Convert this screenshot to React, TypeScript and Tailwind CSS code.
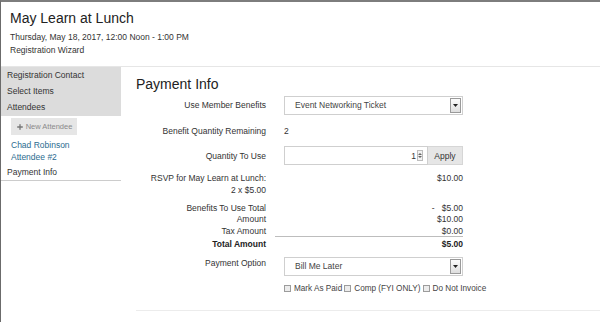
import { Plus } from "lucide-react";

const FONT = { fontFamily: '"Liberation Sans", Arial, sans-serif' };

function SelectBox({ value }: { value: string }) {
  return (
    <div className="flex h-[19px] w-[179px] items-center justify-between border border-[#cfcfcf] bg-white pl-[10px] pr-[1px]">
      <span className="text-[8.5px] text-[#444]">{value}</span>
      <div className="flex h-[15px] w-[11px] items-center justify-center border border-[#9a9a9a] bg-gradient-to-b from-[#fbfbfb] to-[#dedede]">
        <svg width="5" height="3" viewBox="0 0 5 3">
          <path d="M0 0h5L2.5 3z" fill="#222" />
        </svg>
      </div>
    </div>
  );
}

function Check({ label }: { label: string }) {
  return (
    <span className="flex shrink-0 items-center">
      <span className="mr-[3px] h-[7px] w-[7px] border border-[#9c9c9c] bg-[#ececec]" />
      <span className="mr-[2px]">{label}</span>
    </span>
  );
}

const SIDE_TOP = ["Registration Contact", "Select Items", "Attendees"];

export default function App() {
  return (
    <div
      style={FONT}
      className="h-[322px] w-[600px] overflow-hidden border-l border-t-2 border-l-[#6b6b6b] border-t-[#7d7d7d] bg-white text-[#333]"
    >
      <div className="border-b border-[#e6e6e6] px-[9px] pb-[10px] pt-[8px]">
        <h1 className="text-[14px] leading-[16px] text-[#222]">May Learn at Lunch</h1>
        <p className="mt-[5px] text-[8.5px] leading-[12.6px]">Thursday, May 18, 2017, 12:00 Noon - 1:00 PM</p>
        <p className="text-[8.5px] leading-[12.6px]">Registration Wizard</p>
      </div>

      <div className="flex">
        <aside className="w-[120px] shrink-0 self-start text-[8.5px]">
          <div className="bg-[#dcdcdc] pb-[1px] pt-[1px]">
            {SIDE_TOP.map((s) => (
              <div key={s} className="pl-[6px] leading-[15.7px]">{s}</div>
            ))}
          </div>
          <div className="ml-[10px] mt-[2px] flex h-[17px] w-[66px] items-center justify-center gap-[2px] bg-[#e6e6e6] text-[7.5px] text-[#8a8a8a]">
            <Plus size={8} strokeWidth={4} className="text-[#777]" />
            New Attendee
          </div>
          <div className="mt-[4px] pl-[10px] text-[#2b6b8f]">
            <div className="leading-[12px]">Chad Robinson</div>
            <div className="leading-[12px]">Attendee #2</div>
          </div>
          <div className="mt-[1.5px] border-b border-[#cccccc] pl-[6px] leading-[15px]">Payment Info</div>
        </aside>

        <main className="flex-1 pl-[15px] pt-[7.7px] text-[8.5px]">
          <h2 className="text-[14px] leading-[18px] text-[#222]">Payment Info</h2>

          <div className="mt-[3px] grid grid-cols-[130px_179px] items-center gap-x-[18px]">
            <div className="text-right">Use Member Benefits</div>
            <SelectBox value="Event Networking Ticket" />

            <div className="mt-[6.5px] flex h-[19px] items-center justify-end">Benefit Quantity Remaining</div>
            <div className="mt-[6.5px] flex h-[19px] items-center">2</div>

            <div className="mt-[6px] text-right">Quantity To Use</div>
            <div className="mt-[6px] flex h-[19px]">
              <div className="flex flex-1 items-center justify-end border border-[#cfcfcf] pr-[4px]">
                <span>1</span>
                <span className="ml-[1px] flex h-[11px] w-[6px] flex-col items-center justify-center gap-[1px] border border-[#bdbdbd] bg-[#f2f2f2]">
                  <svg width="4" height="2" viewBox="0 0 4 2"><path d="M0 2h4L2 0z" fill="#666" /></svg>
                  <svg width="4" height="2" viewBox="0 0 4 2"><path d="M0 0h4L2 2z" fill="#666" /></svg>
                </span>
              </div>
              <div className="flex w-[35px] items-center justify-center border border-l-0 border-[#d6d6d6] bg-[#e6e6e6] text-[#333]">Apply</div>
            </div>
          </div>

          <div className="mt-[7.5px] grid grid-cols-[130px_179px] gap-x-[18px] leading-[11.7px]">
            <div className="text-right">
              RSVP for May Learn at Lunch:
              <br />2 x $5.00
            </div>
            <div className="text-right">$10.00</div>
          </div>

          <div className="mt-[6.6px] grid grid-cols-[130px_179px] gap-x-[18px] leading-[11.5px]">
            <div className="text-right">Benefits To Use Total</div>
            <div className="whitespace-pre text-right">-   $5.00</div>
            <div className="text-right">Amount</div>
            <div className="text-right">$10.00</div>
            <div className="text-right">Tax Amount</div>
            <div className="-ml-[9px] border-b border-[#bdbdbd] text-right leading-[10.5px]">$0.00</div>
            <div className="pt-[0.5px] text-right font-bold leading-[12px] text-[#222]">Total Amount</div>
            <div className="pt-[0.5px] text-right font-bold leading-[12px] text-[#222]">$5.00</div>
          </div>

          <div className="mt-[6.7px] grid grid-cols-[130px_179px] items-start gap-x-[18px]">
            <div className="pt-[1px] text-right leading-[10px]">Payment Option</div>
            <SelectBox value="Bill Me Later" />
            <div />
            <div className="mt-[7.3px] flex items-center whitespace-nowrap text-[8.2px] leading-[11px] text-[#444]">
              <Check label="Mark As Paid" />
              <Check label="Comp (FYI ONLY)" />
              <Check label="Do Not Invoice" />
            </div>
          </div>

          <div className="mt-[16px] border-t border-[#ececec]" />
        </main>
      </div>
    </div>
  );
}
